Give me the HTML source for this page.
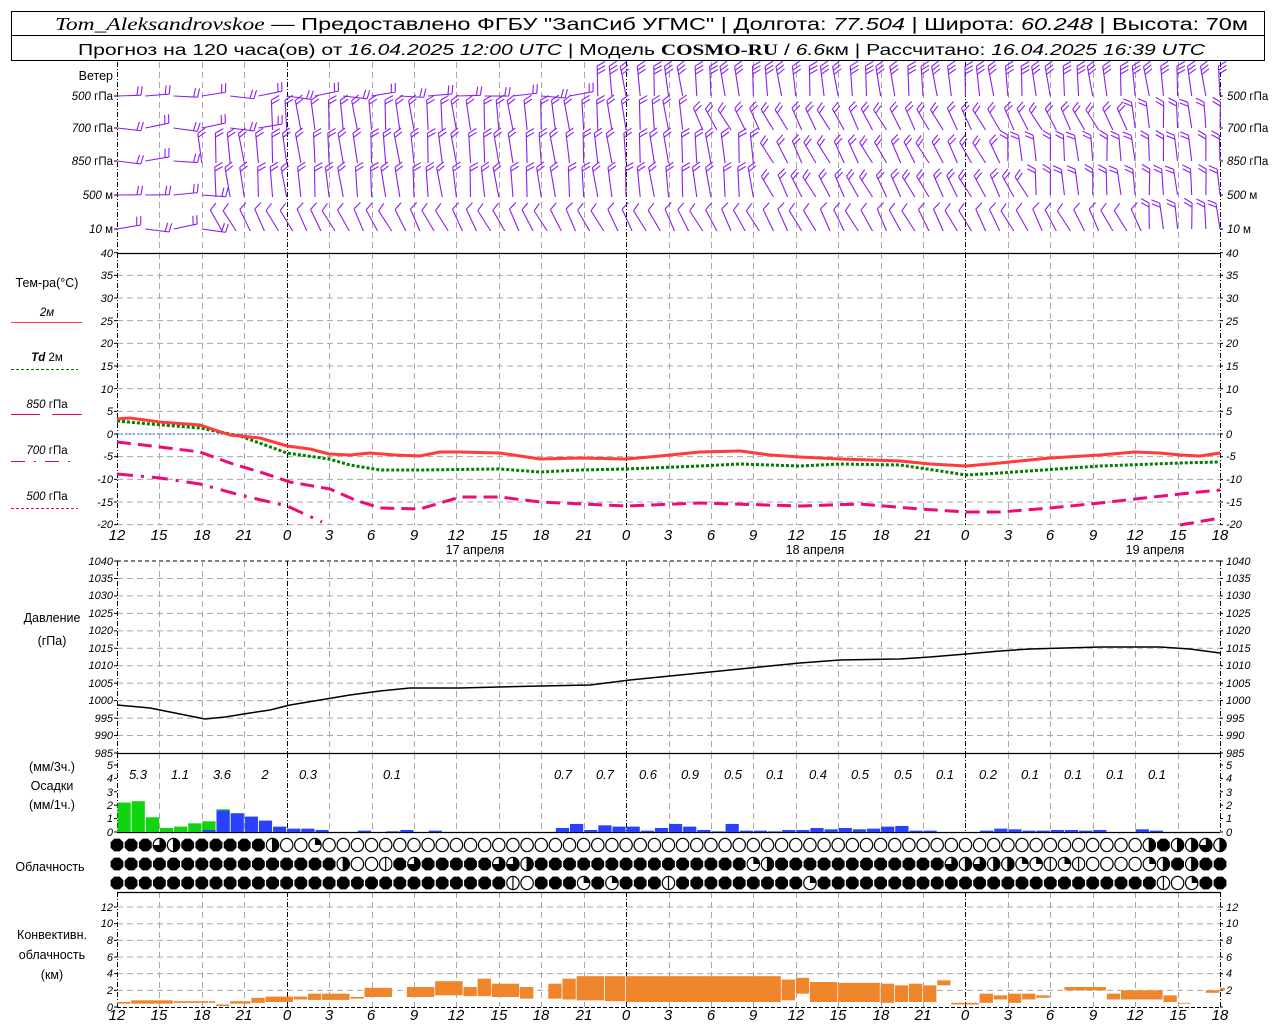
<!DOCTYPE html>
<html><head><meta charset="utf-8">
<style>
html,body{margin:0;padding:0;background:#fff;}
svg{display:block;font-family:"Liberation Sans",sans-serif;}
.ax{font-size:11px;font-style:italic;fill:#000;}
.xl{font-size:15px;font-style:italic;fill:#000;}
.lb{font-size:12.5px;fill:#000;}
.lg{font-size:11.5px;font-style:italic;fill:#000;}
.pr{font-size:13px;font-style:italic;fill:#000;}
</style></head><body>
<svg id="s" width="1280" height="1024" viewBox="0 0 1280 1024" xmlns="http://www.w3.org/2000/svg">
<rect x="0" y="0" width="1280" height="1024" fill="#fff"/>
<g id="g"></g>
<!-- header -->
<rect x="11.5" y="11.5" width="1253" height="49" fill="none" stroke="#000" stroke-width="1"/>
<line x1="11" y1="35.5" x2="1265" y2="35.5" stroke="#000"/>
<text x="55" y="30" font-size="17.5" textLength="1193" lengthAdjust="spacingAndGlyphs"><tspan font-family="Liberation Serif" font-style="italic">Tom_Aleksandrovskoe</tspan> — Предоставлено ФГБУ "ЗапСиб УГМС" | Долгота: <tspan font-style="italic">77.504</tspan> | Широта: <tspan font-style="italic">60.248</tspan> | Высота: 70м</text>
<text x="78" y="55" font-size="16" textLength="1127" lengthAdjust="spacingAndGlyphs">Прогноз на 120 часа(ов) от <tspan font-style="italic">16.04.2025 12:00 UTC</tspan> | Модель <tspan font-family="Liberation Serif" font-weight="bold">COSMO-RU</tspan> / <tspan font-style="italic">6.6</tspan>км | Рассчитано: <tspan font-style="italic">16.04.2025 16:39 UTC</tspan></text>

<!-- wind labels -->
<text class="lb" x="113" y="80" text-anchor="end">Ветер</text>
<g class="lg" text-anchor="end">
<text x="113" y="100">500<tspan font-style="normal"> гПа</tspan></text>
<text x="113" y="132">700<tspan font-style="normal"> гПа</tspan></text>
<text x="113" y="165">850<tspan font-style="normal"> гПа</tspan></text>
<text x="113" y="199">500<tspan font-style="normal"> м</tspan></text>
<text x="113" y="233">10 <tspan font-style="normal">   м</tspan></text>
</g>
<g class="lg">
<text x="1227" y="100">500<tspan font-style="normal"> гПа</tspan></text>
<text x="1227" y="132">700<tspan font-style="normal"> гПа</tspan></text>
<text x="1227" y="165">850<tspan font-style="normal"> гПа</tspan></text>
<text x="1227" y="199">500<tspan font-style="normal"> м</tspan></text>
<text x="1227" y="233">10 <tspan font-style="normal">   м</tspan></text>
</g>

<!-- temp legend -->
<text class="lb" x="47" y="287" text-anchor="middle">Тем-ра(°С)</text>
<text class="lg" x="47" y="316" text-anchor="middle" font-style="normal">2м</text>
<line x1="11" y1="322.5" x2="82" y2="322.5" stroke="#ff3b3b" stroke-width="1"/>
<text class="lg" x="47" y="361" text-anchor="middle"><tspan font-weight="bold">Td</tspan><tspan font-style="normal">  2м</tspan></text>
<line x1="11" y1="369.5" x2="78" y2="369.5" stroke="#007700" stroke-dasharray="3,2"/>
<text class="lg" x="47" y="408" text-anchor="middle">850<tspan font-style="normal"> гПа</tspan></text>
<line x1="11" y1="414.5" x2="40" y2="414.5" stroke="#e8006e"/><line x1="52" y1="414.5" x2="82" y2="414.5" stroke="#e8006e"/>
<text class="lg" x="47" y="454" text-anchor="middle">700<tspan font-style="normal"> гПа</tspan></text>
<line x1="11" y1="461.5" x2="78" y2="461.5" stroke="#e8006e" stroke-dasharray="14,9,2,9"/>
<text class="lg" x="47" y="500" text-anchor="middle">500<tspan font-style="normal"> гПа</tspan></text>
<line x1="11" y1="508.5" x2="78" y2="508.5" stroke="#e8006e" stroke-dasharray="3,2"/>

<!-- temp axis -->
<g class="ax" text-anchor="end">
<text x="113" y="257">40</text><text x="113" y="279">35</text><text x="113" y="302">30</text><text x="113" y="325">25</text><text x="113" y="347">20</text><text x="113" y="370">15</text><text x="113" y="393">10</text><text x="113" y="415">5</text><text x="113" y="438">0</text><text x="113" y="460">-5</text><text x="113" y="483">-10</text><text x="113" y="506">-15</text><text x="113" y="528">-20</text>
</g>
<g class="ax">
<text x="1226" y="257">40</text><text x="1226" y="279">35</text><text x="1226" y="302">30</text><text x="1226" y="325">25</text><text x="1226" y="347">20</text><text x="1226" y="370">15</text><text x="1226" y="393">10</text><text x="1226" y="415">5</text><text x="1226" y="438">0</text><text x="1226" y="460">-5</text><text x="1226" y="483">-10</text><text x="1226" y="506">-15</text><text x="1226" y="528">-20</text>
</g>
<g class="xl" text-anchor="middle">
<text x="117" y="540">12</text><text x="159" y="540">15</text><text x="202" y="540">18</text><text x="244" y="540">21</text><text x="287" y="540">0</text><text x="329" y="540">3</text><text x="371" y="540">6</text><text x="414" y="540">9</text><text x="456" y="540">12</text><text x="499" y="540">15</text><text x="541" y="540">18</text><text x="584" y="540">21</text><text x="626" y="540">0</text><text x="668" y="540">3</text><text x="711" y="540">6</text><text x="753" y="540">9</text><text x="796" y="540">12</text><text x="838" y="540">15</text><text x="881" y="540">18</text><text x="923" y="540">21</text><text x="965" y="540">0</text><text x="1008" y="540">3</text><text x="1050" y="540">6</text><text x="1093" y="540">9</text><text x="1135" y="540">12</text><text x="1178" y="540">15</text><text x="1220" y="540">18</text>
</g>
<g class="lb" text-anchor="middle">
<text x="475" y="554">17 апреля</text><text x="815" y="554">18 апреля</text><text x="1155" y="554">19 апреля</text>
</g>

<!-- pressure -->
<text class="lb" x="52" y="622" text-anchor="middle">Давление</text>
<text class="lb" x="52" y="645" text-anchor="middle">(гПа)</text>
<g class="ax" text-anchor="end" font-size="10">
<text x="113" y="565">1040</text><text x="113" y="582">1035</text><text x="113" y="599">1030</text><text x="113" y="617">1025</text><text x="113" y="634">1020</text><text x="113" y="652">1015</text><text x="113" y="669">1010</text><text x="113" y="687">1005</text><text x="113" y="704">1000</text><text x="113" y="722">995</text><text x="113" y="739">990</text><text x="113" y="757">985</text>
</g>
<g class="ax" font-size="10">
<text x="1226" y="565">1040</text><text x="1226" y="582">1035</text><text x="1226" y="599">1030</text><text x="1226" y="617">1025</text><text x="1226" y="634">1020</text><text x="1226" y="652">1015</text><text x="1226" y="669">1010</text><text x="1226" y="687">1005</text><text x="1226" y="704">1000</text><text x="1226" y="722">995</text><text x="1226" y="739">990</text><text x="1226" y="757">985</text>
</g>

<!-- precip -->
<text class="lb" x="52" y="771" text-anchor="middle">(мм/3ч.)</text>
<text class="lb" x="52" y="790" text-anchor="middle">Осадки</text>
<text class="lb" x="52" y="809" text-anchor="middle">(мм/1ч.)</text>
<g class="ax" text-anchor="end">
<text x="113" y="769">5</text><text x="113" y="782">4</text><text x="113" y="796">3</text><text x="113" y="809">2</text><text x="113" y="822">1</text><text x="113" y="836">0</text>
</g>
<g class="ax">
<text x="1226" y="769">5</text><text x="1226" y="782">4</text><text x="1226" y="796">3</text><text x="1226" y="809">2</text><text x="1226" y="822">1</text><text x="1226" y="836">0</text>
</g>
<g class="pr" text-anchor="middle">
<text x="138" y="779">5.3</text><text x="180" y="779">1.1</text><text x="222" y="779">3.6</text><text x="265" y="779">2</text><text x="308" y="779">0.3</text><text x="392" y="779">0.1</text><text x="563" y="779">0.7</text><text x="605" y="779">0.7</text><text x="648" y="779">0.6</text><text x="690" y="779">0.9</text><text x="733" y="779">0.5</text><text x="775" y="779">0.1</text><text x="818" y="779">0.4</text><text x="860" y="779">0.5</text><text x="903" y="779">0.5</text><text x="945" y="779">0.1</text><text x="988" y="779">0.2</text><text x="1030" y="779">0.1</text><text x="1073" y="779">0.1</text><text x="1115" y="779">0.1</text><text x="1157" y="779">0.1</text>
</g>

<text class="lb" x="50" y="871" text-anchor="middle">Облачность</text>

<!-- conv -->
<text class="lb" x="52" y="939" text-anchor="middle">Конвективн.</text>
<text class="lb" x="52" y="959" text-anchor="middle">облачность</text>
<text class="lb" x="52" y="979" text-anchor="middle">(км)</text>
<g class="ax" text-anchor="end">
<text x="113" y="911">12</text><text x="113" y="927">10</text><text x="113" y="944">8</text><text x="113" y="961">6</text><text x="113" y="977">4</text><text x="113" y="994">2</text><text x="113" y="1011">0</text>
</g>
<g class="ax">
<text x="1226" y="911">12</text><text x="1226" y="927">10</text><text x="1226" y="944">8</text><text x="1226" y="961">6</text><text x="1226" y="977">4</text><text x="1226" y="994">2</text>
</g>
<g class="xl" text-anchor="middle">
<text x="117" y="1020">12</text><text x="159" y="1020">15</text><text x="202" y="1020">18</text><text x="244" y="1020">21</text><text x="287" y="1020">0</text><text x="329" y="1020">3</text><text x="371" y="1020">6</text><text x="414" y="1020">9</text><text x="456" y="1020">12</text><text x="499" y="1020">15</text><text x="541" y="1020">18</text><text x="584" y="1020">21</text><text x="626" y="1020">0</text><text x="668" y="1020">3</text><text x="711" y="1020">6</text><text x="753" y="1020">9</text><text x="796" y="1020">12</text><text x="838" y="1020">15</text><text x="881" y="1020">18</text><text x="923" y="1020">21</text><text x="965" y="1020">0</text><text x="1008" y="1020">3</text><text x="1050" y="1020">6</text><text x="1093" y="1020">9</text><text x="1135" y="1020">12</text><text x="1178" y="1020">15</text><text x="1220" y="1020">18</text>
</g>
</svg>
<script>
(function(){
var NS="http://www.w3.org/2000/svg",g=document.getElementById("g");
function el(t,a){var e=document.createElementNS(NS,t);for(var k in a)e.setAttribute(k,a[k]);g.appendChild(e);return e;}
function X(h){return 117+h*1103/78;}
function line(x1,y1,x2,y2,st,w,da){var a={x1:x1,y1:y1,x2:x2,y2:y2,stroke:st,"stroke-width":w||1};if(da)a["stroke-dasharray"]=da;el("line",a);}
var GR="#a8a8a8";
for(var v=35;v>=-20;v-=5){var y=434-v*4.533;line(117,y,1220,y,GR,1,"6,4");}
for(var p=1040;p>985;p-=5){var y=561+(1040-p)*3.4909;line(117,y,1220,y,p==1040?"#000":GR,1,p==1040?"4,3":"6,4");}
for(var k=2;k<=12;k+=2){var y=1007-k*8.33;line(117,y,1220,y,GR,1,"6,4");}
var panels=[[62,253],[253,525],[561,753],[753,832],[892,1007]];
for(var i=0;i<=26;i++){var x=Math.round(X(i*3))+0.5;var day=(i%8==4)||i==0||i==26;
 panels.forEach(function(P){ if(day) line(x,P[0],x,P[1],"#000",1,"5,2,1,2"); else line(x,P[0],x,P[1],GR,1,"6,4");});}
line(117,434,1220,434,"#3050ff",1,"2,2");
line(117,253.5,1220,253.5,"#000",1.2);
line(117,753.5,1220,753.5,"#000",1.2);
line(117,832.5,1220,832.5,"#000",1.2);
line(117,892.5,1220,892.5,"#000",1.2);
line(117,1007.5,1220,1007.5,"#000",1,"4,2");
function ticks(vals){vals.forEach(function(y){line(114,y,117,y,"#000",1);line(1220,y,1223,y,"#000",1);});}
var tv=[];for(var v=40;v>=-20;v-=5)tv.push(434-v*4.533);ticks(tv);
tv=[];for(var p=1040;p>=985;p-=5)tv.push(561+(1040-p)*3.4909);ticks(tv);
tv=[];for(var m=0;m<=5;m++)tv.push(832-m*13.4);ticks(tv);
tv=[];for(var k=0;k<=12;k+=2)tv.push(1007-k*8.33);ticks(tv);
ticks([96,128,161,195,229]);
function poly(pts,st,w,da){el("polyline",{points:pts.map(function(p){return p.join(",")}).join(" "),fill:"none",stroke:st,"stroke-width":w,"stroke-dasharray":da||"none","stroke-linejoin":"round"});}
poly([[117,442],[160,447],[200,452],[230,463],[260,472],[290,482],[330,489],[355,500],[380,508],[420,509],[460,497],[500,497],[540,502],[626,506],[700,503],[800,506],[860,504],[920,509],[966,512],[1000,512],[1050,508],[1100,503],[1180,494],[1220,490]],"#ee0a78",3,"14,7");
poly([[117,474],[160,478],[200,484],[240,495],[287,506],[322,522]],"#ee0a78",3,"16,8,3,8");
poly([[1180,525],[1220,518]],"#ee0a78",3,"14,7");
poly([[117,421],[150,424],[200,428],[240,436],[287,453],[329,459],[350,465],[380,470],[420,470],[500,469],[540,472],[580,470],[626,469],[700,466],[740,464],[800,466],[840,464],[900,465],[940,471],[966,475],[1000,473],[1100,466],[1180,463],[1220,462]],"#008000",3,"3,2");
poly([[117,419],[130,418],[160,422],[200,425],[230,435],[260,438],[287,446],[310,449],[329,454],[350,455],[370,453],[395,455],[420,456],[440,452],[460,452],[500,453],[540,459],[580,458],[626,459],[660,456],[700,452],[740,451],[770,455],[800,457],[840,459],[900,461],[930,464],[966,466],[1000,463],[1050,458],[1100,455],[1135,452],[1160,453],[1180,455],[1200,456],[1220,453]],"#ff3b3b",3);
poly([[117,705],[150,708],[180,714],[205,719],[225,717],[250,713],[270,710],[290,705],[320,700],[350,695],[380,691],[410,688],[460,688],[540,686],[590,685],[630,680],[660,677],[700,673],[760,667],[800,663],[840,660],[900,659],[930,657],[966,654],[1000,651],[1030,649],[1100,647],[1160,647],[1190,649],[1220,653]],"#000",1.5);
var green={0:2.2,1:2.3,2:1.1,3:0.3,4:0.4,5:0.65,6:0.8,7:1.7};
var blue={6:0.15,7:1.6,8:1.4,9:1.15,10:0.85,11:0.4,12:0.25,13:0.25,14:0.15,17:0.1,19:0.05,20:0.15,22:0.1,31:0.3,32:0.6,33:0.15,34:0.5,35:0.4,36:0.4,37:0.1,38:0.3,39:0.6,40:0.4,41:0.15,42:0.05,43:0.6,44:0.1,45:0.1,46:0.05,47:0.15,48:0.15,49:0.3,50:0.2,51:0.3,52:0.2,53:0.25,54:0.4,55:0.45,56:0.1,57:0.1,61:0.1,62:0.25,63:0.2,64:0.1,65:0.1,66:0.15,67:0.15,68:0.1,69:0.15,72:0.2,73:0.1};
for(var h in green){var x=X(+h);el("rect",{x:x+0.5,y:832-green[h]*13.4,width:13.2,height:green[h]*13.4,fill:"#11d411"});}
for(var h in blue){var x=X(+h);el("rect",{x:x+0.5,y:832-blue[h]*13.4,width:13.2,height:blue[h]*13.4,fill:"#2a40ff"});}
var rows=["444324444442001"+"0".repeat(58)+"242232",
"4444444444444444"+"2005"+"43"+"44444"+"332"+"444444444444444"+"12"+"444444444444"+"3232211515"+"0000"+"124244",
"4444444444444444444444444444"+"50"+"444"+"1"+"4"+"1"+"444"+"5"+"444444444"+"1"+"444444444444444444444444"+"501"+"44"];
var ry=[845,864,883],R=6.6;
function sector(cx,cy,a0,a1){var r=R;var p0=[cx+r*Math.sin(a0),cy-r*Math.cos(a0)],p1=[cx+r*Math.sin(a1),cy-r*Math.cos(a1)];
 var large=(a1-a0)>Math.PI?1:0;el("path",{d:"M"+cx+","+cy+" L"+p0+" A"+r+","+r+" 0 "+large+" 1 "+p1+" Z",fill:"#000"});}
rows.forEach(function(s,ri){for(var i=0;i<79;i++){var c=s[i]||"4",cx=X(i),cy=ry[ri];
 if(c=="4"){el("polygon",{points:(function(){var a=[];for(var k=0;k<8;k++){var t=(k+0.5)*Math.PI/4;a.push((cx+R*1.05*Math.cos(t)).toFixed(1)+","+(cy+R*1.05*Math.sin(t)).toFixed(1));}return a.join(" ")})(),fill:"#000"});continue;}
 el("ellipse",{cx:cx,cy:cy,rx:R-0.4,ry:R,fill:"#fff",stroke:"#000","stroke-width":1.2});
 if(c=="1")sector(cx,cy,0,Math.PI/2);
 if(c=="2")sector(cx,cy,0,Math.PI);
 if(c=="3")sector(cx,cy,0,Math.PI*1.5);
 if(c=="5"||c=="2")line(cx,cy-R,cx,cy+R,"#000",1.2);
}});
var cv=[[0,1,0.4,0.6],[1,4,0.4,0.8],[4,6.5,0.5,0.7],[6.5,7,0.5,0.7],[7,8,0.1,0.3],[8,9.5,0.4,0.7],[9.5,10.5,0.5,1.1],[10.5,12.5,0.6,1.25],[12.5,13.5,0.9,1.25],[13.5,14.5,0.85,1.6],[14.5,16.5,0.85,1.6],[16.5,17.5,1.0,1.2],[17.5,19.5,1.2,2.3],[20.5,22.5,1.2,2.4],[22.5,24.5,1.4,3.1],[24.5,25.5,1.3,2.4],[25.5,26.5,1.3,3.4],[26.5,28.5,1.2,2.8],[28.5,29.5,1.0,2.4],[30.5,31.5,1.0,2.8],[31.5,32.5,0.9,3.4],[32.5,34.5,0.8,3.7],[34.5,36,0.7,3.7],[36,47,0.6,3.7],[47,48,0.8,3.3],[48,49,1.6,3.5],[49,51,0.6,3.0],[51,54,0.6,2.9],[54,55,0.5,2.8],[55,56,0.6,2.6],[56,57,0.6,2.8],[57,58,0.6,2.6],[58,59,2.6,3.2],[59,60,0.3,0.5],[60,61,0.3,0.5],[61,62,0.5,1.6],[62,63,0.9,1.4],[63,64,0.5,1.6],[64,65,0.9,1.6],[65,66,1.1,1.4],[67,70,2.0,2.4],[70,71,0.9,1.6],[71,74,0.9,2.0],[74,75,0.6,1.4],[75,76,0.4,0.5],[77,78,1.7,2.0],[78,78.4,2.0,2.3]];
cv.forEach(function(b){var x0=X(b[0]),x1=X(b[1]);el("rect",{x:x0,y:1007-b[3]*8.33,width:x1-x0-0.8,height:(b[3]-b[2])*8.33,fill:"#f0862c"});});
var PU="#8a1ef0";
function barb(x,y,ang,n,rot,L){L=L||28;var a=ang*Math.PI/180,dx=Math.sin(a),dy=-Math.cos(a);
 var ex=x+dx*L,ey=y+dy*L;line(x,y,ex,ey,PU,1.1);
 var r=rot*Math.PI/180,fx=dx*Math.cos(r)-dy*Math.sin(r),fy=dx*Math.sin(r)+dy*Math.cos(r);
 for(var k=0;k<n;k++){var bx=ex-dx*k*4,by=ey-dy*k*4;line(bx,by,bx+fx*9,by+fy*9,PU,1.1);}}
var LV=[96,128,161,195,229];
function mode(l,h){
 if(l==0){return h<=33?"H":"F";}
 if(l==1){return h<=10?"H":(h<=40?"F":(h>=72?"V":"<"));}
 if(l==2){return h<=5?"H":(h<=45?"F":(h>=63?"V":"<"));}
 if(l==3){return h<=6?"H":(h<=45?"F":(h>=65?"V":"<"));}
 return h<=6?"H":(h>=73?"V":"<");
}
for(var l=0;l<5;l++)for(var h=0;h<=78;h++){
 var x=X(h),y=LV[l],m=mode(l,h),j=Math.sin(h*1.7+l)*5;
 if(m=="H"){ if(h%2==0) barb(x,y,88+j*2,2,-80,24); }
 else if(m=="F")barb(x,y+(l==0?0:2),-6+j,l==0?3:2,62,30);
 else if(m=="<")barb(x+6,y+2,-28+j,l==4?1:2,68,24);
 else barb(x,y,-4+j,2,-60,26);
}
})();
</script>
</body></html>
